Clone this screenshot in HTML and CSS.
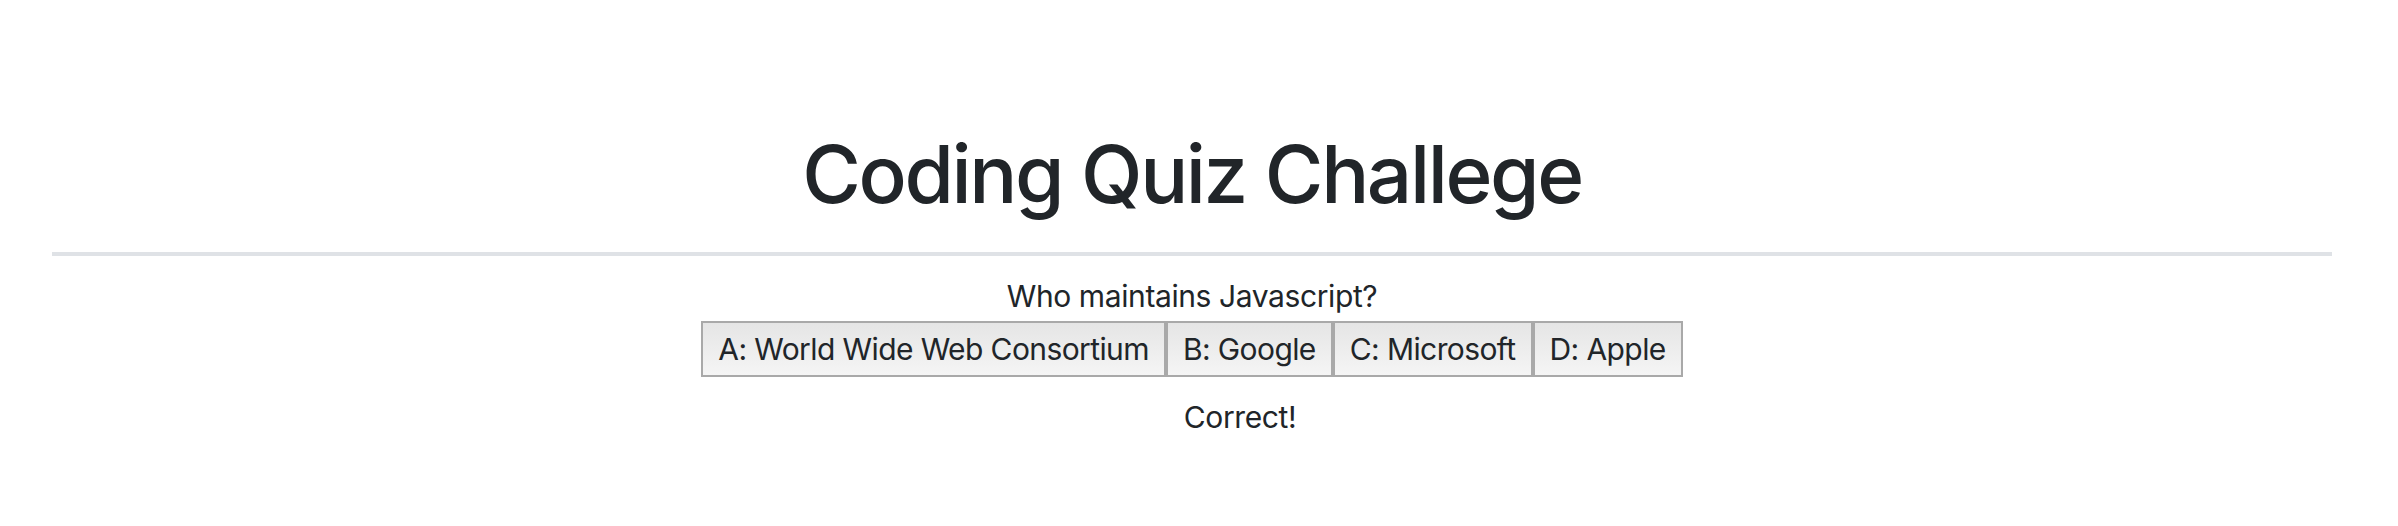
FILE: index.html
```html
<!DOCTYPE html>
<html lang="en">
<head>
<meta charset="utf-8">
<title>Coding Quiz Challege</title>
<link rel="stylesheet" href="styles.css">
</head>
<body>
<div class="container">
  <h1 class="title">Coding Quiz Challege</h1>
  <hr class="divider">
  <div class="quiz">
    <p class="question">Who maintains Javascript?</p>
    <div class="answers">
      <button class="answer">A: World Wide Web Consortium</button>
      <button class="answer">B: Google</button>
      <button class="answer">C: Microsoft</button>
      <button class="answer">D: Apple</button>
    </div>
    <p class="result">Correct!</p>
  </div>
</div>
</body>
</html>
```
FILE: styles.css
```css
html, body {
  margin: 0;
  padding: 0;
  background: #ffffff;
}
body {
  font-family: Inter, "Noto Sans", sans-serif;
  font-size: 30px;
  line-height: 38px;
  letter-spacing: -0.4px;
  color: #212529;
}
.container {
  margin: 0 66px 0 52px;
  padding-top: 126px;
}
.title {
  margin: 0;
  font-size: 80px;
  line-height: 96px;
  font-weight: 500;
  text-align: center;
  letter-spacing: -2.4px;
}
.divider {
  margin: 30px 0 0;
  border: 0;
  border-top: 4px solid #dfe2e6;
  height: 0;
}
.quiz {
  display: flex;
  flex-direction: column;
  align-items: center;
  padding-top: 21px;
}
.question {
  margin: 0;
}
.answers {
  display: flex;
  margin-top: 6px;
}
.answer {
  font-family: inherit;
  font-size: 30px;
  line-height: 38px;
  letter-spacing: -0.6px;
  color: #212529;
  padding: 7px 15px;
  margin: 0;
  border: 2px solid #a9a9a9;
  border-radius: 0;
  background: linear-gradient(to bottom, #e5e5e5, #f5f5f5);
}
.result {
  margin: 21px 0 0 96px;
}
```
